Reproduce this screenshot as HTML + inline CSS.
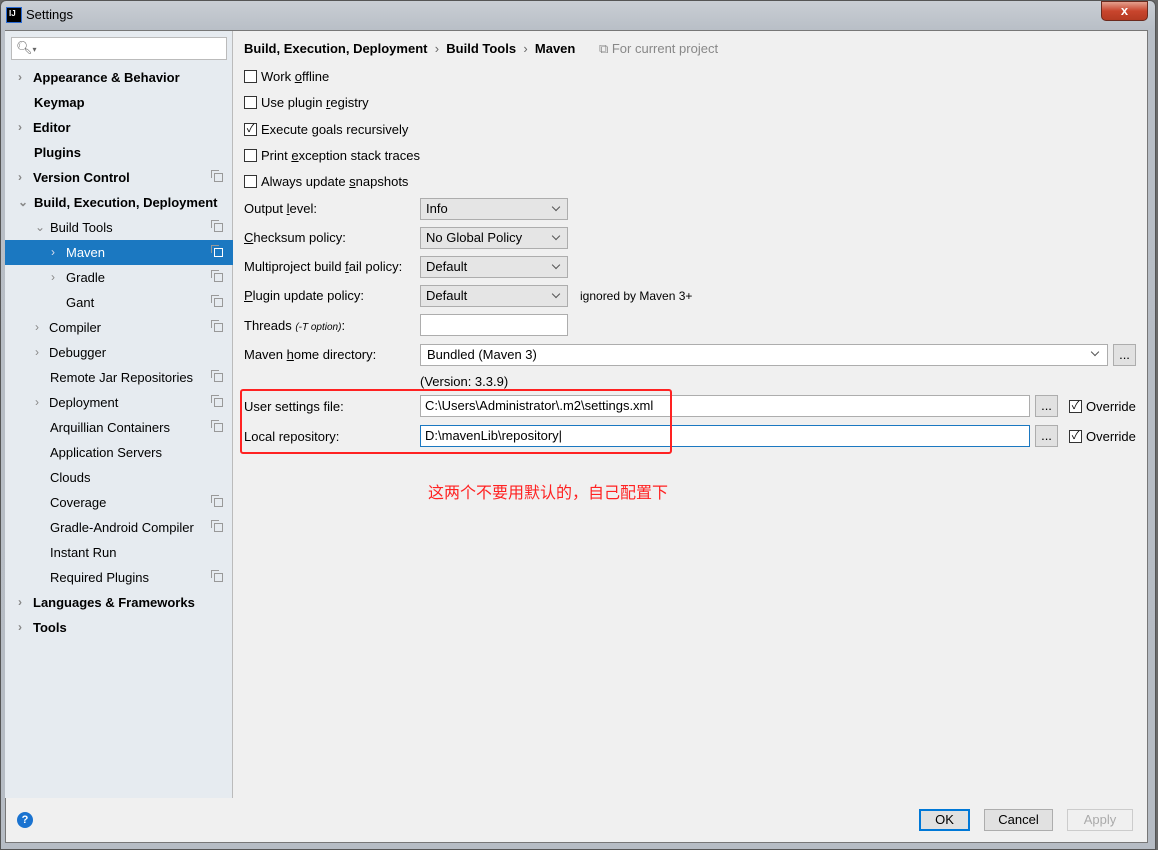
<!DOCTYPE html><html><head><meta charset="utf-8"><style>
*{margin:0;padding:0;box-sizing:border-box}
body{width:1158px;height:850px;background:#6a6a6a;font-family:"Liberation Sans","Noto Sans CJK SC",sans-serif;font-size:13px;color:#000;position:relative;overflow:hidden}
.a{position:absolute}
.title{left:0;top:0;width:1156px;height:850px;background:linear-gradient(#c9ced4,#b8bec6 30px,#b6bcc4);border-radius:6px 6px 0 0;border:1px solid #555}
.client{left:5px;top:30px;width:1143px;height:813px;background:#f0f0f0;border:1px solid #777}
.side{left:5px;top:31px;width:228px;height:767px;background:#e6ebf0;border-right:1px solid #bbb}
.row{position:absolute;left:5px;width:228px;height:25px;line-height:25px;white-space:nowrap}
.b{font-weight:bold}
.sel{background:#1b78c1;color:#fff}
.arr{position:absolute;color:#888;font-size:12px}
.ic{position:absolute;left:209px;top:8px;width:9px;height:9px;border:1px solid #999}
.ic:after{content:"";position:absolute;left:-4px;top:-4px;width:7px;height:7px;border:1px solid #999;border-right:none;border-bottom:none}
.cb{position:absolute;width:13px;height:13px;border:1px solid #333;background:#fff}
.lbl{position:absolute;left:244px;white-space:nowrap}
.combo{position:absolute;left:420px;width:148px;height:22px;background:#e5e5e5;border:1px solid #adadad;padding-left:5px;line-height:20px}
.combo:after{content:"";position:absolute;right:8px;top:5px;width:5px;height:5px;border-right:1px solid #555;border-bottom:1px solid #555;transform:rotate(45deg)}
.inp{position:absolute;background:#fff;border:1px solid #adadad;height:22px;line-height:20px;padding-left:4px}
.btn{position:absolute;background:#e1e1e1;border:1px solid #adadad;text-align:center;line-height:20px}
u{text-decoration:underline}
</style></head><body>
<div class="a title"></div>
<div class="a" style="left:6px;top:7px;width:16px;height:16px;background:#000;border:1px solid #2a6bd6;color:#fff;font-size:8px;font-weight:bold;padding:1px 2px">IJ</div>
<div class="a" style="left:26px;top:7px;font-size:13px">Settings</div>
<div class="a" style="left:1101px;top:1px;width:47px;height:20px;background:linear-gradient(#e4a08e,#c8452d 50%,#b53a22);border:1px solid #6b2a1e;border-radius:0 0 5px 5px;color:#fff;text-align:center;font-weight:bold;line-height:18px">x</div>
<div class="a client"></div>
<div class="a side"></div>
<div class="a" style="left:11px;top:37px;width:216px;height:23px;background:#fff;border:1px solid #bbb;color:#666;padding-left:4px;line-height:20px">🔍︎<span style="font-size:8px">▾</span></div>
<div class="row b" style="top:65px"><span class="arr" style="left:13px">›</span><span style="position:absolute;left:28px">Appearance &amp; Behavior</span></div>
<div class="row b" style="top:90px"><span style="position:absolute;left:29px">Keymap</span></div>
<div class="row b" style="top:115px"><span class="arr" style="left:13px">›</span><span style="position:absolute;left:28px">Editor</span></div>
<div class="row b" style="top:140px"><span style="position:absolute;left:29px">Plugins</span></div>
<div class="row b" style="top:165px"><span class="arr" style="left:13px">›</span><span style="position:absolute;left:28px">Version Control</span><i class="ic"></i></div>
<div class="row b" style="top:190px"><span class="arr" style="left:13px">⌄</span><span style="position:absolute;left:29px">Build, Execution, Deployment</span></div>
<div class="row" style="top:215px"><span class="arr" style="left:30px">⌄</span><span style="position:absolute;left:45px">Build Tools</span><i class="ic"></i></div>
<div class="row sel" style="top:240px"><span class="arr" style="left:46px;color:#dde">›</span><span style="position:absolute;left:61px">Maven</span><i class="ic" style="border-color:#fff"></i></div>
<div class="row" style="top:265px"><span class="arr" style="left:46px">›</span><span style="position:absolute;left:61px">Gradle</span><i class="ic"></i></div>
<div class="row" style="top:290px"><span style="position:absolute;left:61px">Gant</span><i class="ic"></i></div>
<div class="row" style="top:315px"><span class="arr" style="left:30px">›</span><span style="position:absolute;left:44px">Compiler</span><i class="ic"></i></div>
<div class="row" style="top:340px"><span class="arr" style="left:30px">›</span><span style="position:absolute;left:44px">Debugger</span></div>
<div class="row" style="top:365px"><span style="position:absolute;left:45px">Remote Jar Repositories</span><i class="ic"></i></div>
<div class="row" style="top:390px"><span class="arr" style="left:30px">›</span><span style="position:absolute;left:44px">Deployment</span><i class="ic"></i></div>
<div class="row" style="top:415px"><span style="position:absolute;left:45px">Arquillian Containers</span><i class="ic"></i></div>
<div class="row" style="top:440px"><span style="position:absolute;left:45px">Application Servers</span></div>
<div class="row" style="top:465px"><span style="position:absolute;left:45px">Clouds</span></div>
<div class="row" style="top:490px"><span style="position:absolute;left:45px">Coverage</span><i class="ic"></i></div>
<div class="row" style="top:515px"><span style="position:absolute;left:45px">Gradle-Android Compiler</span><i class="ic"></i></div>
<div class="row" style="top:540px"><span style="position:absolute;left:45px">Instant Run</span></div>
<div class="row" style="top:565px"><span style="position:absolute;left:45px">Required Plugins</span><i class="ic"></i></div>
<div class="row b" style="top:590px"><span class="arr" style="left:13px">›</span><span style="position:absolute;left:28px">Languages &amp; Frameworks</span></div>
<div class="row b" style="top:615px"><span class="arr" style="left:13px">›</span><span style="position:absolute;left:28px">Tools</span></div>

<div class="lbl b" style="top:41px">Build, Execution, Deployment &nbsp;<span style="color:#666;font-weight:normal">›</span>&nbsp; Build Tools &nbsp;<span style="color:#666;font-weight:normal">›</span>&nbsp; Maven <span style="font-weight:normal;color:#888;margin-left:20px">⧉ For current project</span></div>
<div class="cb" style="left:244px;top:70px"></div><div class="lbl" style="left:261px;top:69px">Work <u>o</u>ffline</div>
<div class="cb" style="left:244px;top:96px"></div><div class="lbl" style="left:261px;top:95px">Use plugin <u>r</u>egistry</div>
<div class="cb" style="left:244px;top:123px;font-size:11px;line-height:11px;text-align:center">✓</div><div class="lbl" style="left:261px;top:122px">Execute <u>g</u>oals recursively</div>
<div class="cb" style="left:244px;top:149px"></div><div class="lbl" style="left:261px;top:148px">Print <u>e</u>xception stack traces</div>
<div class="cb" style="left:244px;top:175px"></div><div class="lbl" style="left:261px;top:174px">Always update <u>s</u>napshots</div>
<div class="lbl" style="top:201px">Output <u>l</u>evel:</div><div class="combo" style="top:198px">Info</div>
<div class="lbl" style="top:230px"><u>C</u>hecksum policy:</div><div class="combo" style="top:227px">No Global Policy</div>
<div class="lbl" style="top:259px">Multiproject build <u>f</u>ail policy:</div><div class="combo" style="top:256px">Default</div>
<div class="lbl" style="top:288px"><u>P</u>lugin update policy:</div><div class="combo" style="top:285px">Default</div>
<div class="lbl" style="left:580px;top:289px;font-size:12px">ignored by Maven 3+</div>
<div class="lbl" style="top:318px">Threads <i style="font-size:10px">(-T option)</i>:</div><div class="inp" style="left:420px;top:314px;width:148px"></div>
<div class="lbl" style="top:347px">Maven <u>h</u>ome directory:</div>
<div class="inp" style="left:420px;top:344px;width:688px;padding-left:6px">Bundled (Maven 3)<span style="position:absolute;right:9px;top:4px;width:6px;height:6px;border-right:1px solid #555;border-bottom:1px solid #555;transform:rotate(45deg)"></span></div>
<div class="btn" style="left:1113px;top:344px;width:23px;height:22px">...</div>
<div class="lbl" style="left:420px;top:374px">(Version: 3.3.9)</div>
<div class="lbl" style="top:399px">User settings file:</div>
<div class="inp" style="left:420px;top:395px;width:610px">C:\Users\Administrator\.m2\settings.xml</div>
<div class="btn" style="left:1035px;top:395px;width:23px;height:22px">...</div>
<div class="cb" style="left:1069px;top:400px;font-size:11px;line-height:11px;text-align:center">✓</div><div class="lbl" style="left:1086px;top:399px">Override</div>
<div class="lbl" style="top:429px">Local repository:</div>
<div class="inp" style="left:420px;top:425px;width:610px;border-color:#1b78c1">D:\mavenLib\repository|</div>
<div class="btn" style="left:1035px;top:425px;width:23px;height:22px">...</div>
<div class="cb" style="left:1069px;top:430px;font-size:11px;line-height:11px;text-align:center">✓</div><div class="lbl" style="left:1086px;top:429px">Override</div>
<div class="a" style="left:240px;top:389px;width:432px;height:65px;border:2px solid #f22;border-radius:3px"></div>
<div class="lbl" style="left:428px;top:479px;color:#f22;font-size:16px">这两个不要用默认的，自己配置下</div>

<div class="a" style="left:17px;top:812px;width:16px;height:16px;border-radius:50%;background:#1a73d0;color:#fff;font-size:11px;text-align:center;line-height:16px;font-weight:bold">?</div>
<div class="btn" style="left:919px;top:809px;width:51px;height:22px;border:2px solid #0078d7;line-height:18px">OK</div>
<div class="btn" style="left:984px;top:809px;width:69px;height:22px">Cancel</div>
<div class="btn" style="left:1067px;top:809px;width:66px;height:22px;color:#aaa;background:#f0f0f0;border-color:#ccc">Apply</div>
</body></html>
